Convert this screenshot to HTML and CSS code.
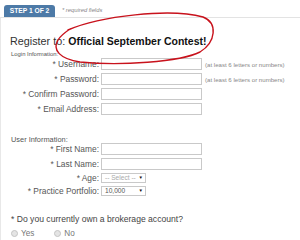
FILE: index.html
```html
<!doctype html>
<html>
<head>
  <meta charset="utf-8"/>
  <title>Register</title>
  <link rel="stylesheet" href="styles.css">
</head>
<body>
  <div class="tabs">
    <div class="tab">STEP 1 OF 2</div>
    <div class="req">* required fields</div>
  </div>
  <div class="panel">
    <h1 class="title">Register to: <b>Official September Contest!</b></h1>
    <div class="section small">Login Information:</div>
    <div class="row"><label>* Username:</label><input type="text"><span class="hint">(at least 6 letters or numbers)</span></div>
    <div class="row"><label>* Password:</label><input type="password"><span class="hint">(at least 6 letters or numbers)</span></div>
    <div class="row"><label>* Confirm Password:</label><input type="password"></div>
    <div class="row"><label>* Email Address:</label><input type="text"></div>

    <div class="section big">User Information:</div>
    <div class="row"><label>* First Name:</label><input type="text"></div>
    <div class="row"><label>* Last Name:</label><input type="text"></div>
    <div class="row sel"><label>* Age:</label><div class="select empty">-- Select --<span class="arrow">▼</span></div></div>
    <div class="row sel"><label>* Practice Portfolio:</label><div class="select">10,000<span class="arrow">▼</span></div></div>

    <div class="question">* Do you currently own a brokerage account?</div>
    <div class="radios">
      <span class="radio"></span><span class="opt">Yes</span>
      <span class="radio"></span><span class="opt">No</span>
    </div>
  </div>

  <!-- red marker circle drawn over the title -->
  <svg class="marker" width="300" height="80" viewBox="0 0 300 80">
    <path d="M68 30 C 100 16, 170 8, 203 17 C 218 23, 216 42, 200 52 C 180 62, 120 66, 80 62 C 60 59, 52 50, 58 40 C 61 35, 64 33, 70 29" fill="none" stroke="#c8121c" stroke-width="1.4" stroke-linecap="round"/>
  </svg>
</body>
</html>
```

FILE: styles.css
```css
html, body {
  margin: 0;
  background: #fff;
  font-family: "Liberation Sans", Arial, sans-serif;
  color: #555;
  overflow: hidden;
}
.tabs {
  height: 17px;
  display: flex;
  align-items: flex-end;
  padding-left: 4px;
  border-bottom: 1px solid #e3e3e3;
}
.tab {
  width: 51px;
  height: 12px;
  line-height: 12px;
  text-align: center;
  background: #4d7aa7;
  color: #fff;
  font-size: 6.7px;
  font-weight: bold;
  border-radius: 3px 3px 0 0;
}
.req {
  align-self: flex-start;
  margin: 8px 0 0 7px;
  font-size: 5.8px;
  font-style: italic;
  color: #888;
  line-height: 5px;
}
.panel {
  display: flow-root;
  box-sizing: border-box;
  border-left: 1px solid #e8e8e8;
  padding-top: 16px;
  height: 222px;
}
.title {
  margin: 0;
  padding-left: 9px;
  font-size: 10.8px;
  line-height: 14px;
  font-weight: normal;
  color: #333;
}
.title b {
  color: #111;
  font-size: 10.5px;
}
.section {
  padding-left: 10px;
  color: #555;
}
.section.small {
  font-size: 5.9px;
  line-height: 7px;
  margin-top: 3px;
}
.section.big {
  font-size: 7.4px;
  line-height: 7px;
  margin-top: 21px;
}
.row {
  display: grid;
  grid-template-columns: 98px 101px auto;
  column-gap: 2px;
  align-items: center;
  height: 12px;
  margin-bottom: 3px;
}
.row label {
  text-align: right;
  font-size: 8.4px;
  color: #555;
}
.row input {
  box-sizing: border-box;
  width: 101px;
  height: 12px;
  margin: 0;
  padding: 0;
  border: 1px solid #c9c9c9;
  background: #fff;
}
.hint {
  font-size: 6.1px;
  color: #888;
  padding-left: 1px;
}
.row.sel {
  height: 10px;
  margin-top: 1px;
}
.select {
  box-sizing: border-box;
  width: 45px;
  height: 10px;
  border: 1px solid #c9c9c9;
  font-size: 6.6px;
  line-height: 8px;
  padding-left: 3px;
  color: #555;
  display: flex;
  justify-content: space-between;
}
.select.empty {
  color: #aaa;
}
.arrow {
  color: #111;
  font-size: 4.5px;
  padding-right: 2px;
}
.question {
  margin-top: 18px;
  padding-left: 10px;
  font-size: 8.6px;
  line-height: 10px;
  color: #444;
}
.radios {
  margin-top: 4px;
  padding-left: 10px;
  display: flex;
  align-items: center;
  height: 10px;
}
.radio {
  box-sizing: border-box;
  width: 7px;
  height: 7px;
  border-radius: 50%;
  border: 1px solid #c4c4c4;
  background: #e4e4e4;
}
.opt {
  font-size: 8.2px;
  color: #777;
  margin: 0 20px 0 3px;
}
.marker {
  position: absolute;
  left: 0;
  top: 0;
  pointer-events: none;
}
```
